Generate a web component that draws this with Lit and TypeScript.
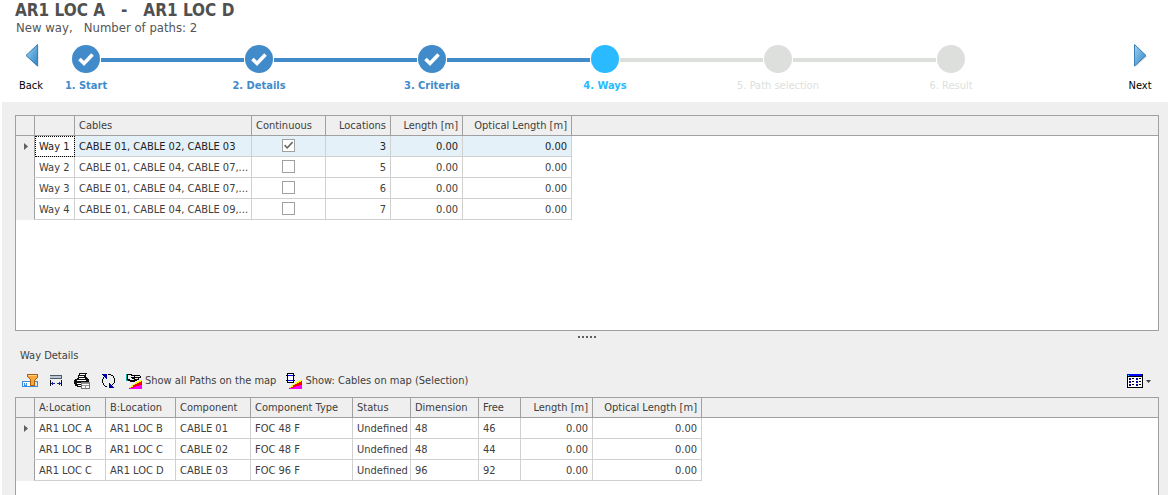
import { LitElement, html, css, svg, nothing } from "lit";
import { customElement, property } from "lit/decorators.js";
import { classMap } from "lit/directives/class-map.js";

interface Column {
  key: string;
  label: string;
  width: number;
  align?: "right" | "center";
  kind?: "check" | "focusable";
}

type Row = Record<string, string | boolean>;

const MAP_PATCH = svg`
  <path fill="#ffff00" d="M3 15V14H5V12H7V11H9V9H11V8H13V7H15V6H16V16H3Z"/>
  <path fill="#ff0000" d="M3 16V15H5V14H7V12H9V11H11V10H13V9H15V8H16V16Z"/>
  <path fill="#ff00ff" d="M4 16V15H8V14H10V13H13V12H16V16Z"/>`;

const ICONS = {
  filter: svg`
    <rect x="0.5" y="8.5" width="15" height="5" fill="#fff" stroke="#3b8ede"/>
    <rect x="9" y="9" width="6" height="4" fill="#c9e2f7"/>
    <path d="M2 10h1v2h1v-2h1v3H2z" fill="#3b8ede"/>
    <path d="M5 1h11v3l-3 3v6H8V7L5 4z" fill="#a85f10"/>
    <path d="M6 2h9v2l-3 3v5H9V7L6 4z" fill="#f5a83c"/>
    <rect x="6" y="2" width="9" height="1" fill="#ffd08a"/>`,
  fit: svg`
    <rect x="2" y="2" width="12" height="4" fill="#4f5a66"/>
    <rect x="2" y="3" width="11" height="2" fill="#b9c6d4"/>
    <rect x="2" y="7" width="1" height="6" fill="#111"/>
    <rect x="13" y="7" width="1" height="6" fill="#111"/>
    <path d="M3 10h1V9h1v1h2v1H5v1H4v-1H3zM13 10h-1V9h-1v1H9v1h2v1h1v-1h1z" fill="#14289c"/>`,
  print: svg`
    <path fill="#111" d="M5 0h8v1h-1v3h1v1h1v1h1v3H8v5H3v-1H1v-2H0V7h1V6h2V5h1V2h1z"/>
    <path fill="#fff" d="M6 1h5v1h-5zM5 3h5v1H5zM5 5h6v1H5zM3 7h9v1H3zM3 10h5v1H3zM4 12h3v1H4z"/>
    <rect x="7.500" y="9.500" width="8" height="6" fill="#fff" stroke="#777"/>
    <path fill="#999" d="M8 10h7v1H8zM8 12h7v1H8zM11 13h1v2h-1z"/>`,
  refresh: svg`
    <path fill="#000" d="M4 3h1v1H4zM3 4h1v2H3zM2 6h1v4H2zM3 10h1v2H3zM4 12h1v1H4zM5 13h2v1H5z"/>
    <path fill="#000" d="M8 1h3v1H8zM11 2h2v1h-2zM13 3h1v2h-1zM14 5h1v5h-1zM13 10h1v1h-1zM12 11h1v1h-1z"/>
    <path fill="#0000a8" d="M2 1h5v5H6V5H5V4H4V3H3V2H2zM9 10h1v1h1v1h1v1h1v1h1v1H9z"/>`,
  hand: svg`
    ${MAP_PATCH}
    <rect x="0" y="1" width="2" height="7" fill="#00b0a8"/>
    <path fill="#000" d="M1 1h5v1h8v1h1v2h-2v2h-2v1H9v1H4V8H2V7H1z"/>
    <path fill="#efefef" d="M2 2h3v1h3v1H5v1h1v1h2v1H4V6H2zM9 3h5v1H9zM8 5h4v1H9z"/>`,
  cable: svg`
    ${MAP_PATCH}
    <rect x="1.500" y="0.500" width="6" height="9" fill="#fff" stroke="#000"/>
    <rect x="0" y="2" width="9" height="1" fill="#000"/>
    <rect x="0" y="7" width="9" height="1" fill="#000"/>
    <path fill="#0000ff" d="M2 2h5v1H2zM2 7h5v1H2z"/>`,
  grid: svg`
    <rect x="0" y="1" width="16" height="14" fill="#000"/>
    <rect x="1" y="4" width="14" height="10" fill="#fff"/>
    <rect x="0" y="1" width="15" height="2" fill="#0000ff"/>
    <rect x="1" y="2" width="1" height="1" fill="#00ffff"/>
    <path fill="#0000a0" d="M2 5h2v2H2zM2 8h2v2H2zM2 11h2v2H2zM9 5h2v2H9zM9 8h2v2H9zM9 11h2v2H9z"/>
    <path fill="#000" d="M5 5h2v1H5zM5 8h2v1H5zM5 11h2v1H5zM12 5h2v1h-2zM12 8h2v1h-2zM12 11h2v1h-2z"/>`,
};

const icon = (name: keyof typeof ICONS) => html`<svg
  class="icon"
  viewBox="0 0 16 16"
  width="16"
  height="16"
  shape-rendering="crispEdges"
  aria-hidden="true"
>${ICONS[name]}</svg>`;

@customElement("data-grid")
export class DataGrid extends LitElement {
  @property({ attribute: false }) columns: Column[] = [];
  @property({ attribute: false }) rows: Row[] = [];
  @property({ type: Boolean }) highlight = false;

  static styles = css`
    :host {
      display: block;
      background: #fff;
      border: 1px solid #a0a0a0;
      overflow: hidden;
    }
    table {
      width: 100%;
      table-layout: fixed;
      border-collapse: separate;
      border-spacing: 0;
    }
    th,
    td {
      box-sizing: border-box;
      padding: 0 4px;
      font-weight: normal;
      text-align: left;
      white-space: nowrap;
      overflow: hidden;
      border-right: 1px solid #d0d0d0;
      border-bottom: 1px solid #d0d0d0;
    }
    th {
      height: 20px;
      background: #efefef;
      border-color: #a0a0a0;
    }
    td {
      height: 21px;
      padding-top: 2px;
    }
    td.check {
      padding-top: 0;
      padding-bottom: 1px;
    }
    .filler {
      border-right: 0;
    }
    td.filler {
      border-bottom: 0;
    }
    .right {
      text-align: right;
    }
    .center {
      text-align: center;
    }
    td.marker {
      padding: 0 3px 0 5px;
      background: #efefef;
      border-right-color: #a0a0a0;
      border-bottom-color: #efefef;
    }
    .marker svg {
      display: block;
      margin: 0 auto;
    }
    .selected td:not(.marker):not(.filler) {
      background: #e4f1f9;
      color: #222;
    }
    .selected td.focus:not(.marker) {
      background: #fff;
      outline: 1px dotted #000;
      outline-offset: -1px;
    }
    input {
      appearance: none;
      display: block;
      box-sizing: border-box;
      width: 13px;
      height: 13px;
      margin: 0 auto;
      background: #fff;
      border: 1px solid #a0a0a0;
    }
    input:checked::before {
      content: "";
      display: block;
      height: 11px;
      background: #666;
      clip-path: polygon(10% 52%, 20% 42%, 38% 62%, 82% 14%, 92% 24%, 38% 82%);
    }
  `;

  private cell(col: Column, row: Row, selected: boolean) {
    const value = row[col.key];
    const classes = classMap({
      right: col.align === "right",
      center: col.align === "center",
      check: col.kind === "check",
      focus: selected && col.kind === "focusable",
    });
    return html`<td class=${classes}>
      ${col.kind === "check"
        ? html`<input type="checkbox" aria-label=${col.label} .checked=${Boolean(value)} />`
        : value}
    </td>`;
  }

  render() {
    return html`
      <table>
        <colgroup>
          <col style="width:19px" />
          ${this.columns.map((c) => html`<col style="width:${c.width}px" />`)}
          <col />
        </colgroup>
        <thead>
          <tr>
            <th class="marker"></th>
            ${this.columns.map(
              (c) => html`<th scope="col" class=${c.align === "right" ? "right" : ""}>${c.label}</th>`
            )}
            <th class="filler"></th>
          </tr>
        </thead>
        <tbody>
          ${this.rows.map((row, i) => {
            const selected = this.highlight && i === 0;
            return html`<tr class=${selected ? "selected" : ""}>
              <td class="marker">
                ${i === 0
                  ? html`<svg width="4" height="7" viewBox="0 0 4 7"><path d="M0 0L4 3.500L0 7Z" fill="#606060" /></svg>`
                  : nothing}
              </td>
              ${this.columns.map((c) => this.cell(c, row, selected))}
              <td class="filler"></td>
            </tr>`;
          })}
        </tbody>
      </table>
    `;
  }
}

type StepState = "done" | "current" | "pending";

@customElement("step-track")
export class StepTrack extends LitElement {
  @property({ attribute: false }) steps: { label: string; state: StepState }[] = [];

  static styles = css`
    :host {
      display: block;
    }
    ol {
      display: flex;
      margin: 0;
      padding: 0;
      list-style: none;
    }
    li {
      display: flex;
      flex: 1;
      --tone: #428bca;
      --line: #428bca;
    }
    li:last-child {
      flex: none;
    }
    li.current {
      --tone: #29baff;
      --line: #dcdfdc;
    }
    li.pending {
      --tone: #dcdfdc;
      --line: #dcdfdc;
    }
    .stop {
      display: flex;
      flex-direction: column;
      align-items: center;
      gap: 6px;
      width: 28px;
      color: var(--tone);
      font-weight: bold;
      line-height: 14px;
      white-space: nowrap;
    }
    .pending .stop {
      font-weight: normal;
    }
    svg {
      display: block;
      fill: var(--tone);
    }
    .line {
      flex: 1;
      height: 4px;
      margin: 13px 1px 0;
      background: var(--line);
    }
  `;

  render() {
    return html`<ol>
      ${this.steps.map(
        (s, i) => html`<li class=${s.state} aria-current=${s.state === "current" ? "step" : "false"}>
          <div class="stop">
            <svg width="28" height="28" viewBox="0 0 28 28" aria-hidden="true">
              <circle cx="14" cy="14" r="14" />
              ${s.state === "done"
                ? svg`<path d="M7.500 14L12 18.500L20.500 9.500" fill="none" stroke="#fff" stroke-width="3.600"/>`
                : nothing}
            </svg>
            <span>${s.label}</span>
          </div>
          ${i < this.steps.length - 1 ? html`<div class="line"></div>` : nothing}
        </li>`
      )}
    </ol>`;
  }
}

@customElement("app-root")
export class AppRoot extends LitElement {
  static styles = css`
    :host {
      display: flex;
      flex-direction: column;
      box-sizing: border-box;
      height: 100vh;
      overflow: hidden;
      background: #fff;
      color: #404040;
      font: 11px/14px "DejaVu Sans Condensed", "Noto Sans", sans-serif;
    }
    button {
      padding: 0;
      border: 0;
      background: none;
      font: inherit;
      color: inherit;
    }
    header {
      padding-bottom: 9px;
    }
    h1 {
      margin: 0;
      padding-left: 15px;
      font-size: 17px;
      line-height: 20px;
      color: #505050;
      white-space: pre;
    }
    .subtitle {
      margin: 0;
      padding-left: 16px;
      font-size: 13px;
      line-height: 16px;
      color: #555;
      white-space: pre;
    }
    nav {
      display: flex;
      align-items: flex-start;
      margin-top: 7px;
    }
    .go {
      display: flex;
      flex-direction: column;
      align-items: center;
      gap: 11px;
      width: 56px;
      color: #000;
    }
    .back {
      margin: 0 13px 0 3px;
    }
    .next {
      margin-left: auto;
    }
    .go svg {
      display: block;
    }
    step-track {
      flex: 0 1 893px;
      margin-top: 2px;
    }
    main {
      flex: 1;
      display: flex;
      flex-direction: column;
      margin-left: 2px;
      padding: 13px 9px 0 13px;
      background: #efefef;
    }
    .ways {
      flex: none;
      min-height: 214px;
    }
    .details {
      flex: 1;
      border-bottom: 0;
    }
    .splitter {
      display: flex;
      justify-content: center;
      gap: 2px;
      padding: 5px 0 11px;
    }
    .splitter i {
      width: 2px;
      height: 2px;
      background: #606060;
    }
    h2 {
      margin: 0;
      padding-left: 5px;
      font-size: 11px;
      font-weight: normal;
      line-height: 14px;
    }
    .toolbar {
      display: flex;
      align-items: center;
      gap: 10px;
      padding: 10px 8px 8px 7px;
    }
    .toolbar button {
      display: flex;
      align-items: center;
      gap: 3px;
      height: 16px;
      white-space: nowrap;
    }
    .toolbar .end {
      margin-left: auto;
    }
    .icon {
      display: block;
      flex: none;
    }
  `;

  private steps = [
    { label: "1. Start", state: "done" as StepState },
    { label: "2. Details", state: "done" as StepState },
    { label: "3. Criteria", state: "done" as StepState },
    { label: "4. Ways", state: "current" as StepState },
    { label: "5. Path selection", state: "pending" as StepState },
    { label: "6. Result", state: "pending" as StepState },
  ];

  private wayColumns: Column[] = [
    { key: "way", label: "", width: 40, kind: "focusable" },
    { key: "cables", label: "Cables", width: 177 },
    { key: "continuous", label: "Continuous", width: 74, align: "center", kind: "check" },
    { key: "locations", label: "Locations", width: 65, align: "right" },
    { key: "length", label: "Length [m]", width: 72, align: "right" },
    { key: "optical", label: "Optical Length [m]", width: 109, align: "right" },
  ];

  private ways: Row[] = [
    { way: "Way 1", cables: "CABLE 01, CABLE 02, CABLE 03", continuous: true, locations: "3", length: "0.00", optical: "0.00" },
    { way: "Way 2", cables: "CABLE 01, CABLE 04, CABLE 07,...", continuous: false, locations: "5", length: "0.00", optical: "0.00" },
    { way: "Way 3", cables: "CABLE 01, CABLE 04, CABLE 07,...", continuous: false, locations: "6", length: "0.00", optical: "0.00" },
    { way: "Way 4", cables: "CABLE 01, CABLE 04, CABLE 09,...", continuous: false, locations: "7", length: "0.00", optical: "0.00" },
  ];

  private detailColumns: Column[] = [
    { key: "a", label: "A:Location", width: 71 },
    { key: "b", label: "B:Location", width: 70 },
    { key: "component", label: "Component", width: 75 },
    { key: "type", label: "Component Type", width: 102 },
    { key: "status", label: "Status", width: 58 },
    { key: "dimension", label: "Dimension", width: 68 },
    { key: "free", label: "Free", width: 42 },
    { key: "length", label: "Length [m]", width: 72, align: "right" },
    { key: "optical", label: "Optical Length [m]", width: 109, align: "right" },
  ];

  private details: Row[] = [
    { a: "AR1 LOC A", b: "AR1 LOC B", component: "CABLE 01", type: "FOC 48 F", status: "Undefined", dimension: "48", free: "46", length: "0.00", optical: "0.00" },
    { a: "AR1 LOC B", b: "AR1 LOC C", component: "CABLE 02", type: "FOC 48 F", status: "Undefined", dimension: "48", free: "44", length: "0.00", optical: "0.00" },
    { a: "AR1 LOC C", b: "AR1 LOC D", component: "CABLE 03", type: "FOC 96 F", status: "Undefined", dimension: "96", free: "92", length: "0.00", optical: "0.00" },
  ];

  private arrow(points: string, id: string) {
    return html`<svg width="16" height="25" viewBox="0 0 16 25" aria-hidden="true">
      <defs>
        <linearGradient id=${id} x1="0" y1="0" x2="1" y2="1">
          <stop offset="0" stop-color="#9fd3f3" />
          <stop offset="1" stop-color="#2b83c3" />
        </linearGradient>
      </defs>
      <polygon points=${points} transform="translate(1 1)" fill="#000" opacity="0.15" />
      <polygon points=${points} fill="url(#${id})" stroke="#3a7fb5" stroke-linejoin="round" />
    </svg>`;
  }

  render() {
    return html`
      <header>
        <h1>${"AR1 LOC A   -   AR1 LOC D"}</h1>
        <p class="subtitle">${"New way,   Number of paths: 2"}</p>
        <nav aria-label="Wizard">
          <button class="go back">${this.arrow("14.500,1.500 14.500,23 3,12.500", "back-fill")}<span>Back</span></button>
          <step-track .steps=${this.steps}></step-track>
          <button class="go next">${this.arrow("2.500,1.500 2.500,23 14,12.500", "next-fill")}<span>Next</span></button>
        </nav>
      </header>
      <main>
        <data-grid class="ways" highlight .columns=${this.wayColumns} .rows=${this.ways}></data-grid>
        <div class="splitter"><i></i><i></i><i></i><i></i><i></i></div>
        <h2>Way Details</h2>
        <div class="toolbar" role="toolbar" aria-label="Way details">
          <button aria-label="Filter row">${icon("filter")}</button>
          <button aria-label="Best fit">${icon("fit")}</button>
          <button aria-label="Print">${icon("print")}</button>
          <button aria-label="Refresh">${icon("refresh")}</button>
          <button>${icon("hand")}<span>Show all Paths on the map</span></button>
          <button>${icon("cable")}<span>Show: Cables on map (Selection)</span></button>
          <button class="end" aria-label="Layout">
            ${icon("grid")}
            <svg width="5" height="3" viewBox="0 0 5 3"><path d="M0 0H5L2.500 3Z" fill="#404040" /></svg>
          </button>
        </div>
        <data-grid class="details" .columns=${this.detailColumns} .rows=${this.details}></data-grid>
      </main>
    `;
  }
}
